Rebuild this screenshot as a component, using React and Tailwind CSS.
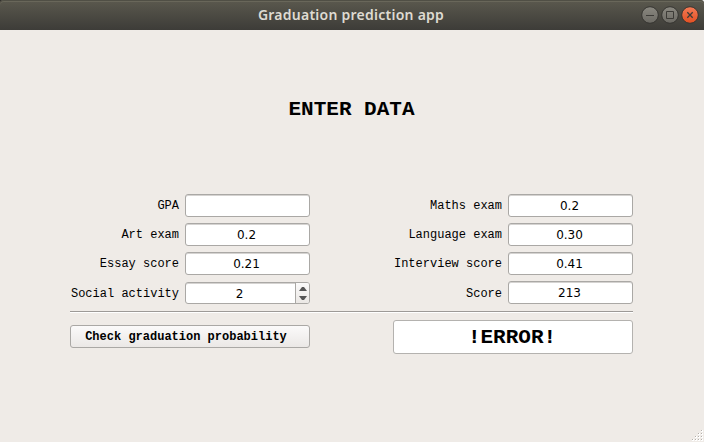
const inputClass =
  'w-[125px] h-[23px] shrink-0 rounded-[3px] border border-[#aaa8a5] bg-white pr-[2px] text-center text-[12px] leading-[21px] font-["DejaVu_Sans",sans-serif] shadow-[inset_0_1px_0_#d5d3d1] outline-none';

function Row({ label, last, children }) {
  return (
    <label className="flex h-[23px] items-start justify-end gap-[6px]">
      <span className={last ? 'whitespace-pre pt-[2px] text-[12px] leading-[23px]' : 'whitespace-pre pt-px text-[12px] leading-[23px]'}>
        {label}
      </span>
      {children}
    </label>
  );
}

function Field({ label, value, last }) {
  return (
    <Row label={label} last={last}>
      <input className={inputClass} defaultValue={value} />
    </Row>
  );
}

function SpinBox({ value }) {
  return (
    <div className="mt-px flex h-[22px] w-[125px] shrink-0 overflow-hidden rounded-[3px] border border-[#aaa8a5] bg-white shadow-[inset_0_1px_0_#d5d3d1]">
      <input
        className='w-[109px] bg-transparent pt-[2px] pr-[2px] text-center text-[12px] leading-[18px] font-["DejaVu_Sans",sans-serif] outline-none'
        defaultValue={value}
      />
      <div className="flex w-[14px] shrink-0 flex-col items-center justify-center gap-[5px] border-l border-[#aaa8a5] bg-linear-to-b from-[#fbfafa] to-[#ebe8e5]">
        <svg width="8" height="4" viewBox="0 0 8 4" fill="#555">
          <path d="M0 4 3 0H5L8 4Z" />
        </svg>
        <svg width="8" height="4" viewBox="0 0 8 4" fill="#555">
          <path d="M0 0 3 4H5L8 0Z" />
        </svg>
      </div>
    </div>
  );
}

function WindowControls() {
  return (
    <svg className="absolute top-[5px] right-[4px]" width="60" height="20" viewBox="0 0 60 20" fill="none">
      <defs>
        <linearGradient id="gray" x1="0" y1="0" x2="0" y2="1">
          <stop stopColor="#8a8880" />
          <stop offset="1" stopColor="#6b6963" />
        </linearGradient>
        <linearGradient id="orange" x1="0" y1="0" x2="0" y2="1">
          <stop stopColor="#f47b56" />
          <stop offset="1" stopColor="#e24f22" />
        </linearGradient>
      </defs>
      <circle cx="10" cy="10" r="8.3" fill="url(#gray)" stroke="#363531" />
      <circle cx="30" cy="10" r="8.3" fill="url(#gray)" stroke="#363531" />
      <circle cx="50" cy="10" r="8.3" fill="url(#orange)" stroke="#363531" />
      <path d="M6 10.5h8" stroke="#3c3b37" />
      <path d="M26.5 6.5h7v7h-7z" stroke="#3c3b37" />
      <path d="M47.3 7.3l5.4 5.4M52.7 7.3l-5.4 5.4" stroke="#3c3b37" strokeWidth="1.3" />
    </svg>
  );
}

const gripDots = [
  [10, 1], [7, 4], [10, 4], [4, 7], [7, 7], [10, 7], [1, 10], [4, 10], [7, 10], [10, 10],
];

export default function App() {
  return (
    <div className='relative flex h-[442px] w-[704px] flex-col overflow-hidden bg-[#efebe7] text-black font-["Courier_10_Pitch","Nimbus_Mono_PS","Liberation_Mono",monospace]'>
      <div className="shrink-0 bg-linear-to-r from-[#33322e] from-50% to-[#e4e4e4] to-50%">
        <header className="relative flex h-[30px] items-center justify-center rounded-t-[4px] bg-linear-to-b from-[#5b594e] to-[#3d3c38] shadow-[inset_0_1px_0_#504f45,inset_0_2px_0_#69675a]">
          <h1 className='whitespace-nowrap pr-[2px] text-[14px] leading-[30px] font-semibold tracking-[0.25px] text-[#dfdbd2] font-["Noto_Sans",sans-serif]'>
            Graduation prediction app
          </h1>
          <WindowControls />
        </header>
      </div>
      <main className="flex flex-col pr-[71px] pl-[70px]">
        <h2 className="mt-[65px] h-[30px] text-center text-[21px] leading-[30px] font-bold">ENTER DATA</h2>
        <div className="mt-[69px] flex justify-between">
          <div className="flex w-[240px] flex-col gap-[6px]">
            <Field label="GPA" value="" />
            <Field label="Art exam" value="0.2" />
            <Field label="Essay score" value="0.21" />
            <Row label="Social activity" last>
              <SpinBox value="2" />
            </Row>
          </div>
          <div className="flex w-[240px] flex-col gap-[6px]">
            <Field label="Maths exam" value="0.2" />
            <Field label="Language exam" value="0.30" />
            <Field label="Interview score" value="0.41" />
            <Field label="Score" value="213" last />
          </div>
        </div>
        <div className="mt-[7px] h-[2px] border-t border-b border-t-[#9d9a97] border-b-white" />
        <div className="mt-[7px] flex items-start justify-between">
          <button className="mt-[5px] h-[23px] w-[240px] whitespace-nowrap rounded-[3px] border border-[#aaa8a5] bg-linear-to-b from-[#fbfafa] to-[#ebe8e6] pt-px pr-[8px] text-[12px] leading-[20px] font-bold">
            Check graduation probability
          </button>
          <output className="h-[34px] w-[240px] rounded-[3px] border border-[#b4b2af] bg-white pt-px pr-[2px] text-center text-[21px] leading-[32px] font-bold">
            !ERROR!
          </output>
        </div>
      </main>
      <svg className="absolute right-0 bottom-0" width="13" height="13" viewBox="0 0 13 13">
        {gripDots.map(([x, y]) => (
          <g key={`${x}-${y}`}>
            <rect x={x} y={y} width="2" height="2" fill="#fff" />
            <rect x={x} y={y} width="1" height="1" fill="#b3afaa" />
          </g>
        ))}
      </svg>
    </div>
  );
}
